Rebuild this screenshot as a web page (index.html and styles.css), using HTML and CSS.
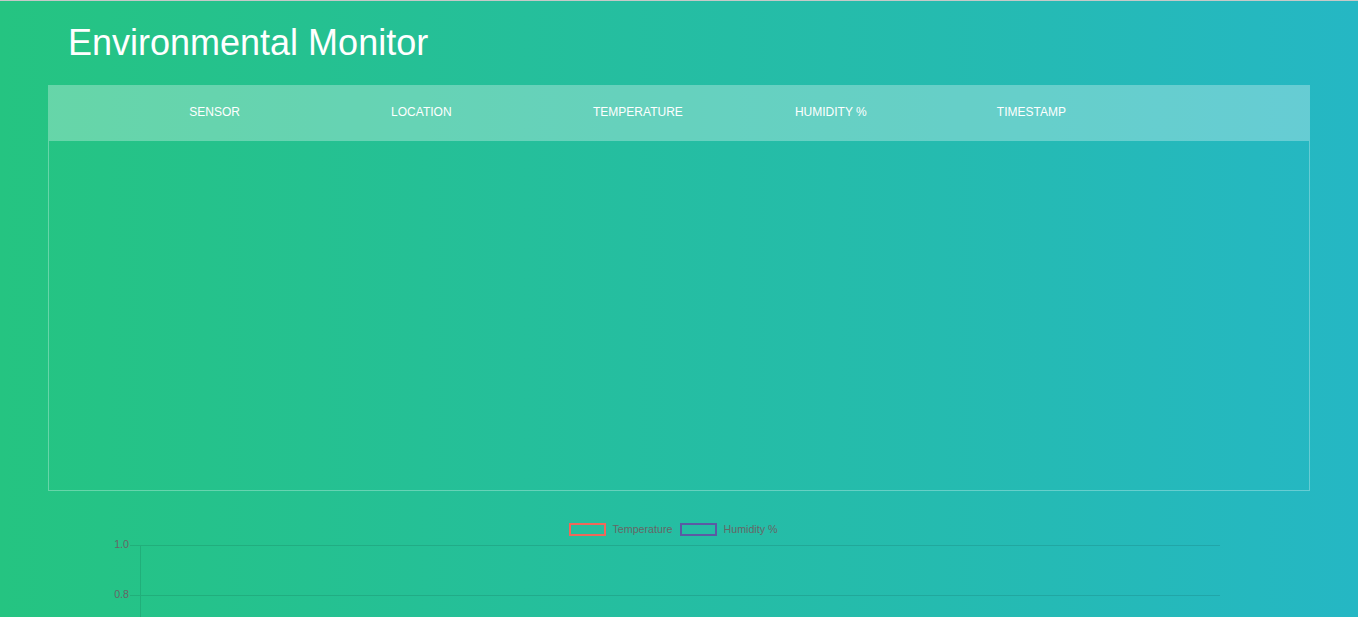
FILE: index.html
```html
<!DOCTYPE html>
<html lang="en">
<head>
<meta charset="utf-8">
<title>Environmental Monitor</title>
<link rel="stylesheet" href="styles.css">
</head>
<body>
<div class="topline"></div>
<section class="page">
  <h1 class="title">Environmental Monitor</h1>
  <div class="tbl-header">
    <table class="tbl">
      <thead>
        <tr>
          <th>Sensor</th>
          <th>Location</th>
          <th>Temperature</th>
          <th>Humidity %</th>
          <th>Timestamp</th>
        </tr>
      </thead>
    </table>
  </div>
  <div class="tbl-content">
    <table class="tbl">
      <tbody></tbody>
    </table>
  </div>

  <div class="chart">
    <div class="legend">
      <div class="legend-item"><span class="swatch swatch-temp"></span><span>Temperature</span></div>
      <div class="legend-item"><span class="swatch swatch-hum"></span><span>Humidity %</span></div>
    </div>
    <div class="plot">
      <div class="row"><span class="tick-label">1.0</span><span class="tick"></span><span class="cell"></span></div>
      <div class="row"><span class="tick-label">0.8</span><span class="tick"></span><span class="cell"></span></div>
      <div class="row row-tail"><span class="tick-label"></span><span class="tick"></span><span class="cell"></span></div>
    </div>
  </div>
</section>
</body>
</html>
```

FILE: styles.css
```css
html {
  background: linear-gradient(to right, #25c481, #25b7c4);
  overflow: hidden;
}

body {
  margin: 0;
  min-height: 617px;
  background: linear-gradient(to right, #25c481, #25b7c4);
  font-family: "Liberation Sans", Arial, Helvetica, sans-serif;
  color: #fff;
}

.topline {
  height: 1px;
  background: #c6c9c8;
}

.page {
  padding: 0 48px;
}

.title {
  margin: 21px 0 21px 20px;
  font-size: 36px;
  line-height: 42px;
  font-weight: 300;
  color: #fff;
}

.tbl-header {
  background-color: rgba(255, 255, 255, 0.3);
}

.tbl {
  width: 80%;
  margin: 0 auto;
  table-layout: fixed;
  border-collapse: collapse;
}

.tbl th {
  padding: 20px 15px;
  text-align: left;
  font-weight: 500;
  font-size: 12px;
  line-height: 15px;
  color: #fff;
  text-transform: uppercase;
}

.tbl-content {
  height: 349px;
  border: 1px solid rgba(255, 255, 255, 0.3);
}

.chart {
  margin: 32px 0 0 60px;
  width: 1131px;
  font-size: 10.7px;
  color: #666;
}

.legend {
  display: flex;
  justify-content: center;
  gap: 8px;
  height: 12px;
  align-items: center;
  padding-right: 0;
}

.legend-item {
  display: flex;
  align-items: center;
  gap: 6px;
  line-height: 12px;
}

.swatch {
  display: block;
  width: 33px;
  height: 9px;
  border: 2px solid;
}

.swatch-temp {
  border-color: #f0685a;
}

.swatch-hum {
  border-color: #5b5aa4;
}

.plot {
  margin-top: 10px;
  width: 1112px;
}

.row {
  display: grid;
  grid-template-columns: 22px 10px 1fr;
  height: 50px;
}

.tick-label {
  text-align: right;
  padding-right: 1px;
  line-height: 12px;
  margin-top: -7px;
}

.tick {
  border-top: 1px solid rgba(0, 0, 0, 0.1);
}

.cell {
  border-top: 1px solid rgba(0, 0, 0, 0.1);
  border-left: 1px solid rgba(0, 0, 0, 0.1);
}

.row-tail .tick {
  border-top-color: transparent;
}
```
